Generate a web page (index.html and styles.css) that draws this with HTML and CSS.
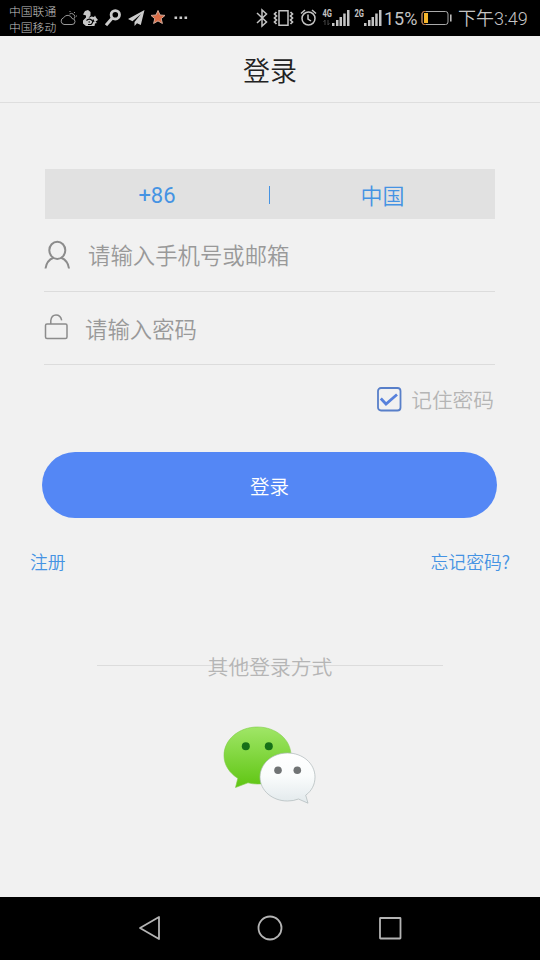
FILE: index.html
```html
<!DOCTYPE html>
<html lang="zh-CN">
<head>
<meta charset="utf-8">
<title>登录</title>
<link rel="stylesheet" href="styles.css">
</head>
<body>
<div class="screen">
  <div class="status">
    <div class="carriers"><span>中国联通</span><span>中国移动</span></div>
    <svg class="notices" width="132" height="36" viewBox="58 0 132 36">
      <g fill="none" stroke="#999" stroke-width="1">
        <path d="M64 24.500h8a3 3 0 0 0 0-6 4.500 4.500 0 0 0-8.300-.8A3.500 3.500 0 0 0 64 24.500"/>
        <path d="M69.500 14a3.500 3.500 0 0 1 5 4.500M70 11v1M75 12l-1 1M77 16h-1"/>
      </g>
      <path fill="#c8c8c8" d="M83 14.500l2-3.500 3-1 2.500 2v3.500L88.500 18l3-1.500 2.500.5 1-1.500 1 2 2 2.500-2.500 1.500L97 23l-2 .5-.5 2.500H86l-3-2.500v-3l3-3v-2z"/>
      <path fill="none" stroke="#000" stroke-width="1.100" d="M86.500 20.500q2.500-2.500 5-.5t-.5 4.500h-3M88.500 22h1.500M93 19.500l1 2.500"/>
      <circle cx="115.300" cy="14.800" r="4.200" fill="none" stroke="#ccc" stroke-width="2.800"/>
      <path d="M112.300 18l-6.300 7.300" stroke="#ccc" stroke-width="3"/>
      <path fill="#ccc" d="M144.500 10L128 19l4.500 2.200L141 14l-6.500 8v4l2.500-2.700 3.800 1.700z"/>
      <path fill="#db6d46" stroke="#d3a999" d="M158 10.500l2 4.500 5 .4-3.800 3.300 1.200 4.800-4.400-2.600-4.400 2.600 1.200-4.800-3.800-3.300 5-.4z"/>
      <path fill="#ccc" d="M174.500 16.500h2.600v2.600h-2.600zM179.500 16.500h2.600v2.600h-2.600zM184.500 16.500h2.600v2.600h-2.600z"/>
    </svg>
    <svg class="signals" width="130" height="36" viewBox="253 0 130 36">
      <g fill="none" stroke="#c4c4c4" stroke-width="1.500">
        <path d="M257 13l9.500 9-4.500 4V10l4.500 4-9.500 9"/>
        <path d="M279 10.700h9v14.600h-9z"/>
        <path d="M276.500 12l-2 2 2 2-2 2 2 2-2 2 2 2M290.500 12l2 2-2 2 2 2-2 2 2 2-2 2" stroke-width="1.700"/>
        <circle cx="308.500" cy="18.500" r="6.500"/>
        <path d="M308 14.500v4.500l3 2M301 13.500l4-3.500M312 10l4 3.500"/>
      </g>
      <g fill="#c4c4c4">
        <path d="M332 23h2.500v3H332zM336 20h2.500v6H336zM339.500 17h2.500v9h-2.500zM343.200 13.500h2.500V26h-2.500zM347 10h2.500v16H347z"/>
        <path d="M364 23h2.500v3H364zM368 20h2.500v6H368zM371.500 17h2.500v9h-2.500zM375.200 13.500h2.500V26h-2.500zM379 10h2.500v16H379z"/>
      </g>
      <path d="M325 20v5M323.500 22l1.500-2M328 20v5M328 25l1.500-2" stroke="#444" fill="none"/>
      <text class="net" x="322.500" y="17" textLength="9.500" lengthAdjust="spacingAndGlyphs">4G</text>
      <text class="net" x="354.500" y="17" textLength="9.500" lengthAdjust="spacingAndGlyphs">2G</text>
    </svg>
    <span class="percent">15%</span>
    <svg class="battery" width="32" height="16" viewBox="0 0 32 16">
      <rect x="1" y="1.500" width="26" height="13" rx="2.500" fill="none" stroke="#aaa"/>
      <path d="M5 1.500H3Q1 1.500 1 4v8q0 2.500 2 2.500h2" fill="none" stroke="#b96b30"/>
      <path fill="#f8b62b" d="M3 3h4v10H3z"/>
      <path fill="#bbb" d="M29 4.500h1.600v7H29z"/>
    </svg>
    <span class="clock">下午3:49</span>
  </div>

  <header class="title">登录</header>

  <main class="content">
    <div class="region"><span class="code">+86</span><i class="bar"></i><span class="country">中国</span></div>
    <div class="field account">
      <svg width="28" height="30" viewBox="0 0 28 30" fill="none" stroke="#8c8c8c" stroke-width="2">
        <ellipse cx="13.300" cy="10.300" rx="8" ry="8.600"/>
        <path d="M1.500 28.500Q2.500 20.500 9.500 17.700M17.100 17.700Q24 20.500 25 28.500"/>
      </svg>
      <span>请输入手机号或邮箱</span>
    </div>
    <div class="field password">
      <svg width="28" height="30" viewBox="0 0 28 30" fill="none" stroke="#8c8c8c" stroke-width="1.500">
        <rect x="1.500" y="12" width="21.500" height="14.500" rx="1.500"/>
        <path d="M6.800 12V8.500Q7.500 3 12 3q4.600 0 5.700 5.300"/>
      </svg>
      <span>请输入密码</span>
    </div>
    <div class="remember">
      <svg width="26" height="26" viewBox="0 0 26 26" fill="none" stroke="#587fc9">
        <rect x="2" y="2" width="22.500" height="22.500" rx="3" stroke-width="1.800"/>
        <path d="M4.800 12.500l5.200 5.500L21 8.500" stroke="#5781dc" stroke-width="2.800"/>
      </svg>
      <span>记住密码</span>
    </div>
    <div class="submit">登录</div>
    <div class="links"><span>注册</span><span>忘记密码?</span></div>
    <div class="other"><span>其他登录方式</span></div>
    <svg class="wechat" width="96" height="82" viewBox="222 725 96 82">
      <defs>
        <linearGradient id="green" x1="0" y1="0" x2="0" y2="1"><stop offset="0" stop-color="#a0e667"/><stop offset="1" stop-color="#5fc512"/></linearGradient>
        <linearGradient id="white" x1="0" y1="0" x2="0" y2="1"><stop offset="0" stop-color="#fff"/><stop offset=".45" stop-color="#fafcfc"/><stop offset="1" stop-color="#e2e9ec"/></linearGradient>
      </defs>
      <path fill="url(#green)" stroke="#80cc48" stroke-width=".6" d="M257.500 727c18.500 0 33.500 12.500 33.500 28.500S276 784 257.500 784q-5.500 0-9.500-1.200L235.500 787.500l2.300-9.200C229.500 773 224 765 224 755.500 224 739.500 239 727 257.500 727z"/>
      <circle cx="245.800" cy="746.300" r="4" fill="#167018"/><circle cx="268.800" cy="746.300" r="4" fill="#167018"/>
      <path fill="url(#white)" stroke="#aeb7b9" stroke-width=".7" d="M287.500 753c15.200 0 27.500 10.500 27.500 24 0 7.800-3.500 14-9.300 18.200l2.300 8-9.500-4.200q-5 2-11 2c-15.200 0-27.500-10.500-27.500-24s12.300-24 27.500-24z"/>
      <circle cx="278" cy="770.300" r="3.800" fill="#707374"/><circle cx="297.300" cy="770.300" r="3.800" fill="#707374"/>
    </svg>
  </main>

  <nav class="keys">
    <svg width="26" height="28" viewBox="0 0 26 28"><path d="M22 3v22L3 14z"/></svg>
    <svg width="26" height="28" viewBox="0 0 26 28"><circle cx="13" cy="14" r="11.500"/></svg>
    <svg width="26" height="28" viewBox="0 0 26 28"><rect x="3" y="4" width="20.500" height="20.500" rx=".5"/></svg>
  </nav>
</div>
</body>
</html>
```
FILE: styles.css
```css
* { box-sizing: border-box; }
body { margin: 0; background: #f1f1f1; font-family: "Noto Sans CJK SC", sans-serif; font-weight: 350; }
svg { display: block; flex: none; }
span { white-space: nowrap; }
.screen { width: 540px; height: 960px; display: flex; flex-direction: column; }
.status { height: 36px; background: #000; color: #c4c4c4; display: flex; align-items: center; padding-left: 9px; flex: none; }
.carriers { width: 49px; display: flex; flex-direction: column; font-size: 11.800px; line-height: 16px; padding-top: 1px; font-weight: 300; }
.signals { margin-left: 63px; }
.net { font: bold 10px "Roboto", sans-serif; fill: #c4c4c4; }
.percent { width: 38px; font: 400 18px "Roboto", sans-serif; padding-left: 1px; }
.battery { margin-top: -1px; }
.clock { margin-left: 5px; font-family: "Roboto", "Noto Sans CJK SC", sans-serif; font-size: 18px; line-height: 36px; padding-top: 1px; }
.title { height: 67px; flex: none; border-bottom: 1px solid #dedede; text-align: center; font-size: 27px; line-height: 67px; color: #222; }
.content { flex: 1; padding-top: 66px; display: flex; flex-direction: column; }
.region { height: 50px; margin: 0 45px; background: #e1e1e1; display: grid; grid-template-columns: 224px 1px 225px; align-items: center; color: #4593e3; font-size: 22px; line-height: 50px; text-align: center; }
.code { font-family: "Roboto", sans-serif; font-weight: 400; padding-top: 2px; }
.bar { height: 18px; background: #4593e3; }
.country { height: 50px; line-height: 48px; }
.field { height: 73px; margin: 0 45px 0 44px; border-bottom: 1px solid #dcdcdc; display: flex; align-items: center; color: #999; font-size: 22.400px; line-height: 32px; }
.account span { margin-left: 16px; padding-bottom: 2px; }
.password svg { margin-top: -2px; }
.password span { margin-left: 13px; padding-bottom: 1px; }
.remember { height: 70px; display: flex; align-items: center; justify-content: flex-end; gap: 9px; padding: 0 46px 2px 0; color: #b5b5b5; font-size: 20.700px; }
.submit { height: 66px; margin: 17px 43px 0 42px; border-radius: 33px; background: #5487f5; color: #fff; font-size: 19.500px; line-height: 67px; text-align: center; }
.links { margin: 30px 30px 0; display: flex; justify-content: space-between; color: #4593e3; font-size: 17.800px; line-height: 26px; }
.other { margin: 76px 97px 0; height: 32px; line-height: 32px; text-align: center; color: #b5b5b5; font-size: 20.800px; background: linear-gradient(#dcdcdc, #dcdcdc) 0 15px / 100% 1px no-repeat; }
.wechat { margin: 43px 0 0 222px; }
.keys { height: 63px; background: #000; display: flex; justify-content: center; align-items: center; gap: 94px; padding-bottom: 1px; flex: none; }
.keys svg { fill: none; stroke: #b4b4b4; stroke-width: 1.800; stroke-linejoin: round; }
```
